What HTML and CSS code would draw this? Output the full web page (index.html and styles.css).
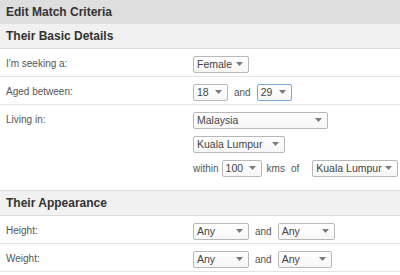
FILE: index.html
```html
<!DOCTYPE html>
<html lang="en">
<head>
    <meta charset="UTF-8">
    <title>Edit Match Criteria</title>
    <link rel="stylesheet" href="styles.css">
</head>
<body>
    <div class="panel">
        <div class="panel-title">Edit Match Criteria</div>

        <!-- 基本资料 -->
        <div class="section-head">Their Basic Details</div>
        <div class="row">
            <div class="label">I'm seeking a:</div>
            <div class="field">
                <div class="line">
                    <span class="sel" style="width:56px">Female<svg width="7" height="4" viewBox="0 0 7 4"><path d="M0 0H7L3.5 4Z"/></svg></span>
                </div>
            </div>
        </div>
        <div class="row">
            <div class="label">Aged between:</div>
            <div class="field">
                <div class="line">
                    <span class="sel" style="width:35px">18<svg width="7" height="4" viewBox="0 0 7 4"><path d="M0 0H7L3.5 4Z"/></svg></span>
                    <span class="word and">and</span>
                    <span class="sel focus" style="width:35px">29<svg width="7" height="4" viewBox="0 0 7 4"><path d="M0 0H7L3.5 4Z"/></svg></span>
                </div>
            </div>
        </div>
        <div class="row living">
            <div class="label">Living in:</div>
            <div class="field">
                <div class="line">
                    <span class="sel" style="width:135px">Malaysia<svg width="7" height="4" viewBox="0 0 7 4"><path d="M0 0H7L3.5 4Z"/></svg></span>
                </div>
                <div class="line">
                    <span class="sel" style="width:92px">Kuala Lumpur<svg width="7" height="4" viewBox="0 0 7 4"><path d="M0 0H7L3.5 4Z"/></svg></span>
                </div>
                <div class="line">
                    <span class="word within">within</span>
                    <span class="sel" style="width:40px">100<svg width="7" height="4" viewBox="0 0 7 4"><path d="M0 0H7L3.5 4Z"/></svg></span>
                    <span class="word kms">kms</span>
                    <span class="word of">of</span>
                    <span class="sel" style="width:86px">Kuala Lumpur<svg width="7" height="4" viewBox="0 0 7 4"><path d="M0 0H7L3.5 4Z"/></svg></span>
                </div>
            </div>
        </div>

        <!-- 外貌 -->
        <div class="section-head bordered">Their Appearance</div>
        <div class="row">
            <div class="label">Height:</div>
            <div class="field">
                <div class="line">
                    <span class="sel" style="width:56px">Any<svg width="7" height="4" viewBox="0 0 7 4"><path d="M0 0H7L3.5 4Z"/></svg></span>
                    <span class="word and">and</span>
                    <span class="sel" style="width:57px">Any<svg width="7" height="4" viewBox="0 0 7 4"><path d="M0 0H7L3.5 4Z"/></svg></span>
                </div>
            </div>
        </div>
        <div class="row">
            <div class="label">Weight:</div>
            <div class="field">
                <div class="line">
                    <span class="sel" style="width:56px">Any<svg width="7" height="4" viewBox="0 0 7 4"><path d="M0 0H7L3.5 4Z"/></svg></span>
                    <span class="word and">and</span>
                    <span class="sel" style="width:54px">Any<svg width="7" height="4" viewBox="0 0 7 4"><path d="M0 0H7L3.5 4Z"/></svg></span>
                </div>
            </div>
        </div>
    </div>
</body>
</html>
```

FILE: styles.css
```css
html, body {
    margin: 0;
    padding: 0;
    background: #ffffff;
}

.panel {
    width: 400px;
    font-family: "Liberation Sans", Arial, sans-serif;
    color: #555555;
}

.panel-title {
    height: 24px;
    line-height: 24px;
    padding-left: 6px;
    background: #dedede;
    color: #333333;
    font-size: 12px;
    font-weight: bold;
}

.section-head {
    height: 24px;
    line-height: 25px;
    padding-left: 6px;
    background: #f1f1f1;
    border-bottom: 1px solid #dcdcdc;
    color: #333333;
    font-size: 12px;
    font-weight: bold;
}

.section-head.bordered {
    border-top: 1px solid #dcdcdc;
}

.row {
    display: grid;
    grid-template-columns: 187px 1fr;
    padding: 7px 0 4px 6px;
    border-bottom: 1px solid #e4e4e4;
}

.row.living {
    padding-bottom: 14px;
    border-bottom: none;
}

.label {
    font-size: 10px;
    line-height: 16px;
}

.field {
    display: flex;
    flex-direction: column;
    gap: 8px;
}

.line {
    display: flex;
    align-items: center;
    height: 16px;
}

.sel {
    box-sizing: border-box;
    display: flex;
    align-items: center;
    justify-content: space-between;
    height: 17px;
    padding: 0 5px 0 3px;
    border: 1px solid #b8b8b8;
    border-radius: 2px;
    background: linear-gradient(#ffffff, #f6f6f6);
    color: #444444;
    font-size: 10.5px;
    white-space: nowrap;
}

.sel.focus {
    border-color: #7ea6d8;
}

.sel svg {
    flex: none;
    fill: #7a7a7a;
}

.word {
    font-size: 10px;
    color: #555555;
}

.and { margin: 0 6px; }
.within { margin-right: 3px; }
.kms { margin: 0 6px 0 5px; }
.of { margin-right: 13px; }
```
